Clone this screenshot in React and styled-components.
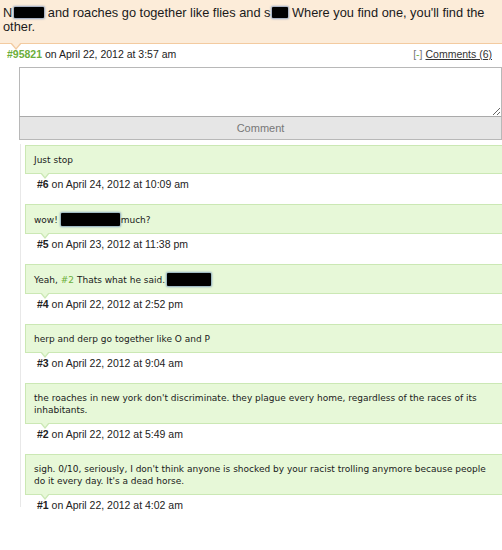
import React from "react";
import styled, { createGlobalStyle } from "styled-components";

const GlobalStyle = createGlobalStyle`
  body {
    margin: 0;
    background: #fff;
    font-family: "Liberation Sans", Arial, sans-serif;
    color: #222;
    overflow: hidden;
  }
`;

const Page = styled.div`
  width: 502px;
  height: 550px;
`;

const PostBody = styled.div`
  position: relative;
  box-sizing: border-box;
  height: 44px;
  background: #fcecd9;
  border-bottom: 1px solid #f3cba0;
  padding: 6px 4px 0 3px;
  font-size: 12.8px;
  line-height: 14px;
  color: #1a1a1a;
  &::before {
    content: "";
    position: absolute;
    left: 10px;
    bottom: -7px;
    border-left: 6px solid transparent;
    border-right: 6px solid transparent;
    border-top: 7px solid #f3cba0;
  }
  &::after {
    content: "";
    position: absolute;
    left: 11px;
    bottom: -5px;
    border-left: 5px solid transparent;
    border-right: 5px solid transparent;
    border-top: 6px solid #fcecd9;
  }
`;

const Redact = styled.span`
  display: inline-block;
  width: ${p => p.w}px;
  height: ${p => p.h || 11}px;
  margin: 0 ${p => p.mr || 0}px 0 ${p => p.ml || 0}px;
  background: #000;
  vertical-align: ${p => p.va || -1}px;
  box-shadow: 0 0 2px 1px rgba(70, 110, 170, 0.6);
  border-radius: 1px;
`;

const MetaRow = styled.div`
  display: flex;
  justify-content: space-between;
  align-items: center;
  padding: 0 10px 0 7px;
  height: 20px;
  font-size: 10.5px;
  color: #222;
`;

const Num = styled.span`
  color: #6cae3a;
  font-weight: bold;
`;

const Toggle = styled.span`
  color: #777;
  i {
    font-style: normal;
    color: #6cae3a;
  }
  a {
    color: #333;
    text-decoration: underline;
    margin-left: 3px;
  }
`;

const Form = styled.div`
  margin: 3px 0 0 19px;
  width: 483px;
`;

const TextArea = styled.textarea`
  display: block;
  box-sizing: border-box;
  width: 100%;
  height: 50px;
  margin: 0;
  border: 1px solid #b8b8b8;
  border-bottom-color: #aaa;
  background: #fff;
  resize: vertical;
`;

const Button = styled.div`
  box-sizing: border-box;
  height: 23px;
  background: #e6e6e6;
  border: 1px solid #b8b8b8;
  border-top: none;
  color: #777;
  font-size: 11px;
  display: flex;
  align-items: center;
  justify-content: center;
`;

const List = styled.div`
  margin: 4px 0 0 20px;
  border-left: 1px solid #e8e8e8;
  padding: 1px 0 0 4px;
  height: 362px;
`;

const Comment = styled.div``;

const Bubble = styled.div`
  position: relative;
  background: #e7f8d8;
  border: 1px solid #cbe8b4;
  border-right: none;
  padding: 8px 8px 7px;
  font-family: "DejaVu Sans", "Liberation Sans", sans-serif;
  font-size: 9px;
  line-height: 12px;
  color: #1a1a1a;
  &::before {
    content: "";
    position: absolute;
    left: 14px;
    bottom: -6px;
    border-left: 5px solid transparent;
    border-right: 5px solid transparent;
    border-top: 6px solid #cbe8b4;
  }
  &::after {
    content: "";
    position: absolute;
    left: 15px;
    bottom: -4px;
    border-left: 4px solid transparent;
    border-right: 4px solid transparent;
    border-top: 5px solid #e7f8d8;
  }
`;

const CMeta = styled.div`
  box-sizing: border-box;
  height: 30px;
  padding: 3px 0 0 12px;
  font-size: 10.5px;
  line-height: 14px;
  color: #222;
  b {
    font-weight: bold;
  }
`;

const Link = styled.span`
  color: #6cae3a;
`;

const comments = [
  { n: 6, date: "April 24, 2012 at 10:09 am", body: <>Just stop</> },
  {
    n: 5,
    date: "April 23, 2012 at 11:38 pm",
    body: (
      <>
        wow! <Redact w={59} h={13} va={-3} mr={1} />much?
      </>
    ),
  },
  {
    n: 4,
    date: "April 22, 2012 at 2:52 pm",
    body: (
      <>
        Yeah, <Link>#2</Link> Thats what he said.<Redact w={44} h={13} va={-3} ml={2} />
      </>
    ),
  },
  { n: 3, date: "April 22, 2012 at 9:04 am", body: <>herp and derp go together like O and P</> },
  {
    n: 2,
    date: "April 22, 2012 at 5:49 am",
    body: (
      <>
        the roaches in new york don't discriminate. they plague every home, regardless of the races of its
        inhabitants.
      </>
    ),
  },
  {
    n: 1,
    date: "April 22, 2012 at 4:02 am",
    body: (
      <>
        sigh. 0/10, seriously, I don't think anyone is shocked by your racist trolling anymore because people
        do it every day. It's a dead horse.
      </>
    ),
  },
];

export default function App() {
  return (
    <Page>
      <GlobalStyle />
      <PostBody>
        N<Redact w={30} ml={2} /> and roaches go together like flies and s<Redact w={16} ml={2} /> Where you find
        one, you'll find the other.
      </PostBody>
      <MetaRow>
        <span>
          <Num>#95821</Num> on April 22, 2012 at 3:57 am
        </span>
        <Toggle>
          [<i>-</i>]<a>Comments (6)</a>
        </Toggle>
      </MetaRow>
      <Form>
        <TextArea />
        <Button>Comment</Button>
      </Form>
      <List>
        {comments.map(c => (
          <Comment key={c.n}>
            <Bubble>{c.body}</Bubble>
            <CMeta>
              <b>#{c.n}</b> on {c.date}
            </CMeta>
          </Comment>
        ))}
      </List>
    </Page>
  );
}
